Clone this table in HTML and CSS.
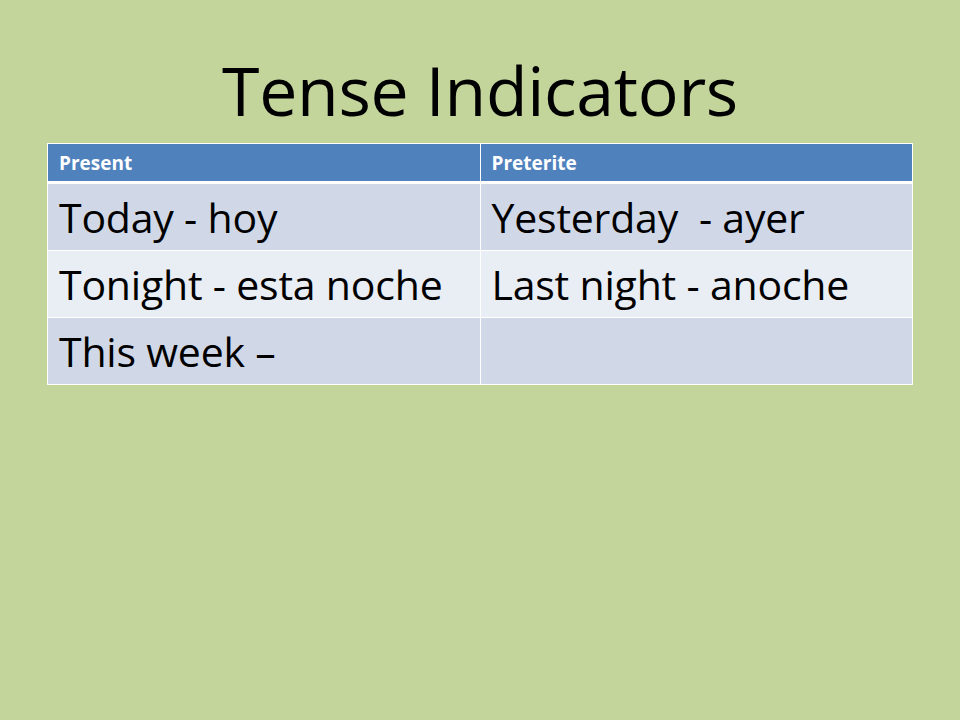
FILE: index.html
```html
<!DOCTYPE html>
<html lang="en">
<head>
<meta charset="utf-8">
<title>Tense Indicators</title>
<link rel="stylesheet" href="styles.css">
</head>
<body>
<main class="slide">
  <h1 class="title">Tense Indicators</h1>
  <table class="grid">
    <thead>
      <tr><th>Present</th><th>Preterite</th></tr>
    </thead>
    <tbody>
      <tr class="odd"><td>Today - hoy</td><td>Yesterday&nbsp; - ayer</td></tr>
      <tr class="even"><td>Tonight - esta noche</td><td>Last night - anoche</td></tr>
      <tr class="odd"><td>This week –</td><td></td></tr>
    </tbody>
  </table>
</main>
</body>
</html>
```
FILE: styles.css
```css
html, body {
  margin: 0;
  padding: 0;
  background: #c4d59c;
}
.slide {
  width: 960px;
  height: 720px;
  box-sizing: border-box;
  padding: 0 47px 0 47px;
  font-family: "Open Sans", "Liberation Sans", sans-serif;
  color: #000;
}
.title {
  margin: 0;
  padding-top: 44px;
  height: 100px;
  box-sizing: border-box;
  text-align: center;
  font-weight: 400;
  font-size: 68px;
  line-height: 92px;
  letter-spacing: -0.3px;
}
.grid {
  margin-top: 43px;
  width: 866px;
  border-collapse: collapse;
  table-layout: fixed;
}
.grid th, .grid td {
  border: 1px solid #fff;
  text-align: left;
  padding: 0 0 0 11px;
  vertical-align: middle;
  white-space: nowrap;
}
.grid th {
  background: #4f81bd;
  color: #fff;
  font-weight: 700;
  font-size: 19px;
  height: 37px;
  border-bottom: 3px solid #fff;
}
.grid td {
  font-size: 41px;
  height: 66px;
  letter-spacing: -0.2px;
}
.grid tr.odd td { background: #d0d8e8; }
.grid tr.even td { background: #e9edf4; }
```
